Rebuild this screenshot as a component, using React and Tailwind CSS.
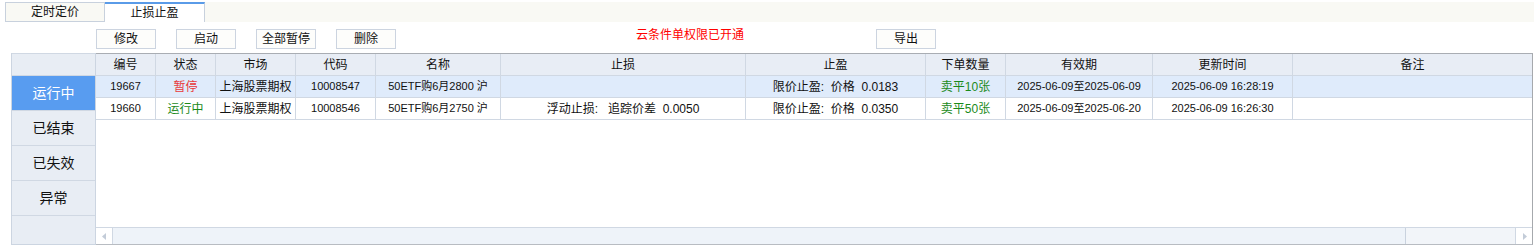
import React from "react";

const cols = "grid-cols-[60px_60px_80px_80px_125px_245px_180px_80px_147px_140px_1fr]";
const headers = ["编号", "状态", "市场", "代码", "名称", "止损", "止盈", "下单数量", "有效期", "更新时间", "备注"];

const rows = [
  {
    id: "19667",
    status: "暂停",
    statusColor: "text-[#e8393a]",
    market: "上海股票期权",
    code: "10008547",
    name: "50ETF购6月2800 沪",
    stopLoss: "",
    takeProfit: "限价止盈:  价格  0.0183",
    qty: "卖平10张",
    valid: "2025-06-09至2025-06-09",
    updated: "2025-06-09 16:28:19",
    selected: true,
  },
  {
    id: "19660",
    status: "运行中",
    statusColor: "text-[#1a8a1a]",
    market: "上海股票期权",
    code: "10008546",
    name: "50ETF购6月2750 沪",
    stopLoss: "浮动止损:   追踪价差  0.0050",
    takeProfit: "限价止盈:  价格  0.0350",
    qty: "卖平50张",
    valid: "2025-06-09至2025-06-20",
    updated: "2025-06-09 16:26:30",
    selected: false,
  },
];

const sideItems = ["运行中", "已结束", "已失效", "异常"];

function Btn({ children }) {
  return (
    <div className="w-[60px] h-[20px] border border-[#ccd4e0] bg-[#fdfdfb] flex items-center justify-center text-[12px] leading-none text-[#111]">
      {children}
    </div>
  );
}

function Cell({ children, className = "" }) {
  return (
    <div className={`h-[22px] border-r border-b border-[#d0d8e3] flex items-center justify-center whitespace-pre overflow-hidden ${className}`}>
      {children}
    </div>
  );
}

export default function App() {
  return (
    <div className="w-[1534px] h-[249px] bg-white text-[12px] text-[#111] font-['Liberation_Sans','Noto_Sans_CJK_SC',sans-serif] overflow-hidden">
      {/* tabs */}
      <div className="mt-[2px] ml-[5px] h-[20px] flex bg-[#f9f9f4]">
        <div className="w-[100px] h-[20px] border border-[#c8d1dd] flex items-center justify-center">定时定价</div>
        <div className="w-[100px] h-[20px] border-t-2 border-t-[#5a9be8] border-r border-r-[#c8d1dd] bg-white flex items-center justify-center">止损止盈</div>
      </div>

      {/* toolbar */}
      <div className="mt-[7px] ml-[96px] h-[20px] flex items-center">
        <div className="flex gap-[20px]">
          <Btn>修改</Btn>
          <Btn>启动</Btn>
          <Btn>全部暂停</Btn>
          <Btn>删除</Btn>
        </div>
        <div className="w-[480px] h-[20px] pl-[240px] flex items-start text-[#ff0000] leading-[14px] -mt-[2px]">云条件单权限已开通</div>
        <Btn>导出</Btn>
      </div>

      {/* main */}
      <div className="mt-[4px] ml-[11px] flex h-[192px]">
        <div className="w-[85px] h-full bg-[#e8edf4] border-l border-r border-b border-[#ccd5e1] flex flex-col">
          <div className="h-[23px] border-t border-b border-[#d0d8e3]" />
          {sideItems.map((s, i) => (
            <div
              key={s}
              className={`h-[35px] border-b border-[#d0d8e3] flex items-center justify-center text-[14px] ${i === 0 ? "bg-[#589cf0] text-white" : "text-[#111]"}`}
            >
              {s}
            </div>
          ))}
          <div className="flex-1" />
        </div>

        <div className="w-[1437px] h-full border-t border-t-[#a9adb3] border-r border-r-[#a6a9ad] border-b border-b-[#b8bcc2] flex flex-col">
          <div className={`grid ${cols} bg-[#e8edf5]`}>
            {headers.map((h, i) => (
              <Cell key={h} className={i === headers.length - 1 ? "border-r-0" : ""}>{h}</Cell>
            ))}
          </div>
          {rows.map((r) => (
            <div key={r.id} className={`grid ${cols} ${r.selected ? "bg-[#dfebfb]" : "bg-white"}`}>
              <Cell className="text-[11px]">{r.id}</Cell>
              <Cell className={r.statusColor}>{r.status}</Cell>
              <Cell>{r.market}</Cell>
              <Cell className="text-[11px]">{r.code}</Cell>
              <Cell className="text-[11px]">{r.name}</Cell>
              <Cell>{r.stopLoss}</Cell>
              <Cell>{r.takeProfit}</Cell>
              <Cell className="text-[#1a8a1a]">{r.qty}</Cell>
              <Cell className="text-[11px]">{r.valid}</Cell>
              <Cell className="text-[11px]">{r.updated}</Cell>
              <Cell className="border-r-0" />
            </div>
          ))}
          <div className="flex-1 bg-white" />
          {/* horizontal scrollbar */}
          <div className="h-[17px] flex border-t border-[#d0d8e3] bg-[#f2f5f9]">
            <div className="w-[17px] h-full bg-white border-r border-[#d0d8e3] flex items-center justify-center">
              <svg width="5" height="7" viewBox="0 0 5 7"><path d="M4 0 L0 3.5 L4 7 Z" fill="#c3ccd8" /></svg>
            </div>
            <div className="w-[1293px] h-full bg-[#eef3f9] border-r border-[#c9d2de]" />
            <div className="flex-1" />
            <div className="w-[17px] h-full bg-white border-l border-[#d0d8e3] flex items-center justify-center">
              <svg width="5" height="7" viewBox="0 0 5 7"><path d="M1 0 L5 3.5 L1 7 Z" fill="#c3ccd8" /></svg>
            </div>
          </div>
        </div>
      </div>
    </div>
  );
}
